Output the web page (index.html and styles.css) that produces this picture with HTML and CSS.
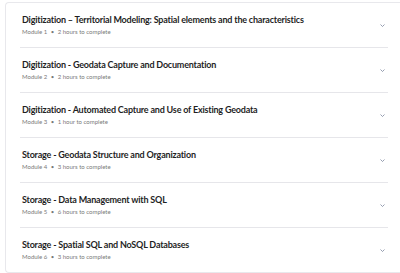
FILE: index.html
```html
<!DOCTYPE html>
<html lang="en">
<head>
    <meta charset="UTF-8">
    <meta name="viewport" content="width=device-width, initial-scale=1.0">
    <title>Modules</title>
    <link rel="stylesheet" href="styles.css">
</head>
<body>

    <div class="card">
        <div class="module">
            <div class="module-info">
                <h3>Digitization – Territorial Modeling: Spatial elements and the characteristics</h3>
                <p>Module 1 <span class="dot">•</span> 2 hours to complete</p>
            </div>
            <svg class="chevron" viewBox="0 0 10 6"><path d="M1 1l4 4 4-4"/></svg>
        </div>
        <div class="module">
            <div class="module-info">
                <h3>Digitization - Geodata Capture and Documentation</h3>
                <p>Module 2 <span class="dot">•</span> 2 hours to complete</p>
            </div>
            <svg class="chevron" viewBox="0 0 10 6"><path d="M1 1l4 4 4-4"/></svg>
        </div>
        <div class="module">
            <div class="module-info">
                <h3>Digitization - Automated Capture and Use of Existing Geodata</h3>
                <p>Module 3 <span class="dot">•</span> 1 hour to complete</p>
            </div>
            <svg class="chevron" viewBox="0 0 10 6"><path d="M1 1l4 4 4-4"/></svg>
        </div>
        <div class="module">
            <div class="module-info">
                <h3>Storage - Geodata Structure and Organization</h3>
                <p>Module 4 <span class="dot">•</span> 3 hours to complete</p>
            </div>
            <svg class="chevron" viewBox="0 0 10 6"><path d="M1 1l4 4 4-4"/></svg>
        </div>
        <div class="module">
            <div class="module-info">
                <h3>Storage - Data Management with SQL</h3>
                <p>Module 5 <span class="dot">•</span> 6 hours to complete</p>
            </div>
            <svg class="chevron" viewBox="0 0 10 6"><path d="M1 1l4 4 4-4"/></svg>
        </div>
        <div class="module">
            <div class="module-info">
                <h3>Storage - Spatial SQL and NoSQL Databases</h3>
                <p>Module 6 <span class="dot">•</span> 3 hours to complete</p>
            </div>
            <svg class="chevron" viewBox="0 0 10 6"><path d="M1 1l4 4 4-4"/></svg>
        </div>
    </div>

</body>
</html>
```

FILE: styles.css
```css
* {
    margin: 0;
    padding: 0;
    box-sizing: border-box;
}

body {
    font-family: 'Lato', 'Open Sans', sans-serif;
    background: #ffffff;
    color: #1f1f1f;
    padding: 2px 0 0 5px;
}

.card {
    border: 1px solid #e8e8ec;
    border-right: none;
    border-radius: 4px 0 0 4px;
    padding: 0 12px 0 14px;
}

.module {
    display: flex;
    align-items: center;
    justify-content: space-between;
    height: 45px;
    padding: 0 3px 0 2px;
    border-bottom: 1px solid #e6e6ea;
}

.module:last-child {
    border-bottom: none;
    height: 44px;
}

.module-info h3 {
    font-size: 9px;
    font-weight: bold;
    color: #1f1f1f;
    line-height: 12px;
    letter-spacing: -0.2px;
    margin-bottom: 2px;
}

.module-info p {
    font-size: 6px;
    color: #7a7a7a;
    line-height: 8px;
}

.dot {
    margin: 0 2px;
}

.chevron {
    width: 5px;
    height: 3px;
    fill: none;
    stroke: #6a7590;
    stroke-width: 1.4;
}
```
